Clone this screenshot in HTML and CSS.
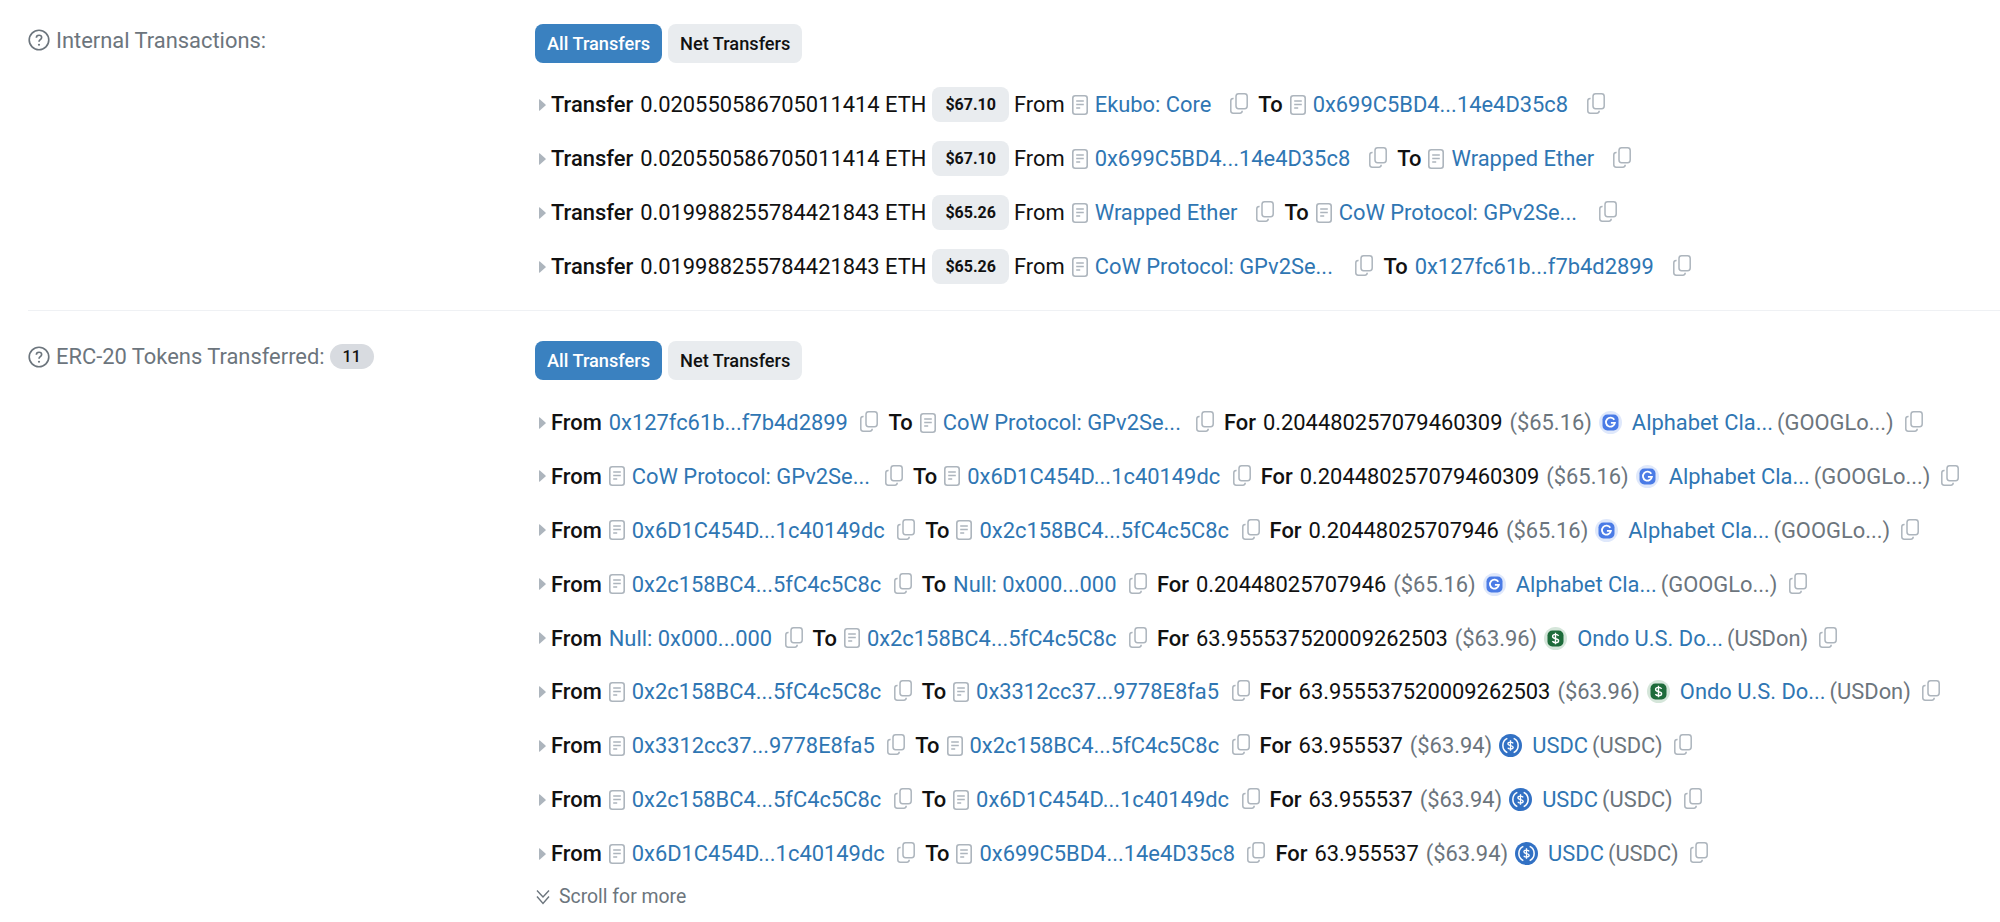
FILE: index.html
```html
<!DOCTYPE html>
<html lang="en">
<head>
    <meta charset="UTF-8">
    <title>Transaction details</title>
    <link rel="stylesheet" href="styles.css">
</head>
<body>
    <svg class="sprites" width="0" height="0">
        <symbol id="help" viewBox="0 0 20 20">
            <circle cx="10" cy="10" r="8.9" fill="none" stroke="currentColor" stroke-width="1.5"/>
            <path d="M7.6 8c0-1.5 1.100-2.300 2.400-2.300s2.400 .8 2.400 2.100c0 1.900-2.400 1.900-2.400 3.700" fill="none" stroke="currentColor" stroke-width="1.5"/>
            <circle cx="10" cy="14.300" r="1" fill="currentColor"/>
        </symbol>
        <symbol id="caret" viewBox="0 0 8 12">
            <path d="M1 .8v10.400c0 .5 .5 .7 .9 .4l5.600-5.200c.3-.3 .3-.6 0-.9L1.900 .4C1.500 .1 1 .3 1 .8z" fill="currentColor"/>
        </symbol>
        <symbol id="doc" viewBox="0 0 16 20">
            <rect x=".8" y=".8" width="14.400" height="18.400" rx="2.400" fill="none" stroke="currentColor" stroke-width="1.600"/>
            <path d="M4.200 6h7.600M4.200 9.500h7.600M4.200 13h4" stroke="currentColor" stroke-width="1.300"/>
        </symbol>
        <symbol id="copy" viewBox="0 0 18 21">
            <rect x="6" y=".8" width="11.200" height="14.900" rx="2.600" fill="none" stroke="currentColor" stroke-width="1.500"/>
            <path d="M3.600 5.400h-.4A2.400 2.400 0 0 0 .8 7.800v10a2.400 2.400 0 0 0 2.400 2.400h6.600a2.400 2.400 0 0 0 2.400-2.400" fill="none" stroke="currentColor" stroke-width="1.500"/>
        </symbol>
        <symbol id="chevrons" viewBox="0 0 16 16">
            <path d="M2 1.500l6 6.500 6-6.500M2 7.500l6 7 6-7" fill="none" stroke="currentColor" stroke-width="1.400"/>
        </symbol>
        <symbol id="google" viewBox="0 0 23 23">
            <circle cx="11.500" cy="11.500" r="11.500" fill="#dfe8fb"/>
            <rect x="3.500" y="3.500" width="16" height="16" rx="4.800" fill="#4a7be6"/>
            <path d="M15.300 8.800a4.500 4.500 0 1 0 .6 3.100h-4" fill="none" stroke="#fff" stroke-width="1.800"/>
        </symbol>
        <symbol id="ondo" viewBox="0 0 23 23">
            <circle cx="11.500" cy="11.500" r="11.500" fill="#d5e6da"/>
            <rect x="3.500" y="3.500" width="16" height="16" rx="4.800" fill="#1d6b3a"/>
            <path d="M14.600 8.800c-.6-1-1.700-1.400-3.100-1.400-1.600 0-2.900 .8-2.900 2.100 0 3 6 1.400 6 4.200 0 1.300-1.400 2-3.100 2-1.400 0-2.500-.5-3.100-1.500M11.500 5.800v11.400" fill="none" stroke="#fff" stroke-width="1.400"/>
        </symbol>
        <symbol id="usdc" viewBox="0 0 24 24">
            <circle cx="12" cy="12" r="12" fill="#3271c4"/>
            <path d="M8.700 4.600a8.200 8.200 0 0 0 0 14.800M15.300 4.600a8.200 8.200 0 0 1 0 14.800" fill="none" stroke="#fff" stroke-width="1.600"/>
            <path d="M14.800 9.800c-.4-.9-1.500-1.400-2.800-1.400-1.500 0-2.700 .7-2.700 1.800 0 2.600 5.500 1.200 5.500 3.700 0 1.100-1.300 1.800-2.800 1.800-1.300 0-2.400-.5-2.800-1.400M12 6.600v10.800" fill="none" stroke="#fff" stroke-width="1.400"/>
        </symbol>
    </svg>

    <section class="section">
        <div class="label">
            <svg class="help"><use href="#help"/></svg>
            <span>Internal Transactions:</span>
        </div>
        <div class="content">
            <div class="tabs">
                <button class="tab active">All Transfers</button>
                <button class="tab">Net Transfers</button>
            </div>
            <ul class="rows internal">
                <li class="row">
                    <svg class="caret"><use href="#caret"/></svg>
                    <b>Transfer</b><span>0.020550586705011414 ETH</span><span class="price">$67.10</span>
                    <span>From</span>
                    <svg class="doc"><use href="#doc"/></svg><a class="link wide">Ekubo: Core</a><svg class="copy"><use href="#copy"/></svg>
                    <b>To</b>
                    <svg class="doc"><use href="#doc"/></svg><a class="link wide">0x699C5BD4...14e4D35c8</a><svg class="copy"><use href="#copy"/></svg>
                </li>
                <li class="row">
                    <svg class="caret"><use href="#caret"/></svg>
                    <b>Transfer</b><span>0.020550586705011414 ETH</span><span class="price">$67.10</span>
                    <span>From</span>
                    <svg class="doc"><use href="#doc"/></svg><a class="link wide">0x699C5BD4...14e4D35c8</a><svg class="copy"><use href="#copy"/></svg>
                    <b>To</b>
                    <svg class="doc"><use href="#doc"/></svg><a class="link wide">Wrapped Ether</a><svg class="copy"><use href="#copy"/></svg>
                </li>
                <li class="row">
                    <svg class="caret"><use href="#caret"/></svg>
                    <b>Transfer</b><span>0.019988255784421843 ETH</span><span class="price">$65.26</span>
                    <span>From</span>
                    <svg class="doc"><use href="#doc"/></svg><a class="link wide">Wrapped Ether</a><svg class="copy"><use href="#copy"/></svg>
                    <b>To</b>
                    <svg class="doc"><use href="#doc"/></svg><a class="link wider">CoW Protocol: GPv2Se...</a><svg class="copy"><use href="#copy"/></svg>
                </li>
                <li class="row">
                    <svg class="caret"><use href="#caret"/></svg>
                    <b>Transfer</b><span>0.019988255784421843 ETH</span><span class="price">$65.26</span>
                    <span>From</span>
                    <svg class="doc"><use href="#doc"/></svg><a class="link wider">CoW Protocol: GPv2Se...</a><svg class="copy"><use href="#copy"/></svg>
                    <b>To</b>
                    <a class="link wide">0x127fc61b...f7b4d2899</a><svg class="copy"><use href="#copy"/></svg>
                </li>
            </ul>
        </div>
    </section>

    <section class="section">
        <div class="label">
            <svg class="help"><use href="#help"/></svg>
            <span>ERC-20 Tokens Transferred:</span>
            <span class="count">11</span>
        </div>
        <div class="content">
            <div class="tabs">
                <button class="tab active">All Transfers</button>
                <button class="tab">Net Transfers</button>
            </div>
            <ul class="rows">
                <li class="row">
                    <svg class="caret"><use href="#caret"/></svg>
                    <b>From</b>
                    <a class="link">0x127fc61b...f7b4d2899</a><svg class="copy"><use href="#copy"/></svg>
                    <b>To</b>
                    <svg class="doc"><use href="#doc"/></svg><a class="link mid">CoW Protocol: GPv2Se...</a><svg class="copy"><use href="#copy"/></svg>
                    <b>For</b><span>0.204480257079460309</span><span class="muted">($65.16)</span>
                    <svg class="token"><use href="#google"/></svg><a class="name">Alphabet Cla...</a><span class="symbol">(GOOGLo...)</span><svg class="copy"><use href="#copy"/></svg>
                </li>
                <li class="row">
                    <svg class="caret"><use href="#caret"/></svg>
                    <b>From</b>
                    <svg class="doc"><use href="#doc"/></svg><a class="link mid">CoW Protocol: GPv2Se...</a><svg class="copy"><use href="#copy"/></svg>
                    <b>To</b>
                    <svg class="doc"><use href="#doc"/></svg><a class="link">0x6D1C454D...1c40149dc</a><svg class="copy"><use href="#copy"/></svg>
                    <b>For</b><span>0.204480257079460309</span><span class="muted">($65.16)</span>
                    <svg class="token"><use href="#google"/></svg><a class="name">Alphabet Cla...</a><span class="symbol">(GOOGLo...)</span><svg class="copy"><use href="#copy"/></svg>
                </li>
                <li class="row">
                    <svg class="caret"><use href="#caret"/></svg>
                    <b>From</b>
                    <svg class="doc"><use href="#doc"/></svg><a class="link">0x6D1C454D...1c40149dc</a><svg class="copy"><use href="#copy"/></svg>
                    <b>To</b>
                    <svg class="doc"><use href="#doc"/></svg><a class="link">0x2c158BC4...5fC4c5C8c</a><svg class="copy"><use href="#copy"/></svg>
                    <b>For</b><span>0.20448025707946</span><span class="muted">($65.16)</span>
                    <svg class="token"><use href="#google"/></svg><a class="name">Alphabet Cla...</a><span class="symbol">(GOOGLo...)</span><svg class="copy"><use href="#copy"/></svg>
                </li>
                <li class="row">
                    <svg class="caret"><use href="#caret"/></svg>
                    <b>From</b>
                    <svg class="doc"><use href="#doc"/></svg><a class="link">0x2c158BC4...5fC4c5C8c</a><svg class="copy"><use href="#copy"/></svg>
                    <b>To</b>
                    <a class="link">Null: 0x000...000</a><svg class="copy"><use href="#copy"/></svg>
                    <b>For</b><span>0.20448025707946</span><span class="muted">($65.16)</span>
                    <svg class="token"><use href="#google"/></svg><a class="name">Alphabet Cla...</a><span class="symbol">(GOOGLo...)</span><svg class="copy"><use href="#copy"/></svg>
                </li>
                <li class="row">
                    <svg class="caret"><use href="#caret"/></svg>
                    <b>From</b>
                    <a class="link">Null: 0x000...000</a><svg class="copy"><use href="#copy"/></svg>
                    <b>To</b>
                    <svg class="doc"><use href="#doc"/></svg><a class="link">0x2c158BC4...5fC4c5C8c</a><svg class="copy"><use href="#copy"/></svg>
                    <b>For</b><span>63.955537520009262503</span><span class="muted">($63.96)</span>
                    <svg class="token"><use href="#ondo"/></svg><a class="name">Ondo U.S. Do...</a><span class="symbol">(USDon)</span><svg class="copy"><use href="#copy"/></svg>
                </li>
                <li class="row">
                    <svg class="caret"><use href="#caret"/></svg>
                    <b>From</b>
                    <svg class="doc"><use href="#doc"/></svg><a class="link">0x2c158BC4...5fC4c5C8c</a><svg class="copy"><use href="#copy"/></svg>
                    <b>To</b>
                    <svg class="doc"><use href="#doc"/></svg><a class="link">0x3312cc37...9778E8fa5</a><svg class="copy"><use href="#copy"/></svg>
                    <b>For</b><span>63.955537520009262503</span><span class="muted">($63.96)</span>
                    <svg class="token"><use href="#ondo"/></svg><a class="name">Ondo U.S. Do...</a><span class="symbol">(USDon)</span><svg class="copy"><use href="#copy"/></svg>
                </li>
                <li class="row">
                    <svg class="caret"><use href="#caret"/></svg>
                    <b>From</b>
                    <svg class="doc"><use href="#doc"/></svg><a class="link">0x3312cc37...9778E8fa5</a><svg class="copy"><use href="#copy"/></svg>
                    <b>To</b>
                    <svg class="doc"><use href="#doc"/></svg><a class="link">0x2c158BC4...5fC4c5C8c</a><svg class="copy"><use href="#copy"/></svg>
                    <b>For</b><span>63.955537</span><span class="muted">($63.94)</span>
                    <svg class="token"><use href="#usdc"/></svg><a class="name">USDC</a><span class="symbol">(USDC)</span><svg class="copy"><use href="#copy"/></svg>
                </li>
                <li class="row">
                    <svg class="caret"><use href="#caret"/></svg>
                    <b>From</b>
                    <svg class="doc"><use href="#doc"/></svg><a class="link">0x2c158BC4...5fC4c5C8c</a><svg class="copy"><use href="#copy"/></svg>
                    <b>To</b>
                    <svg class="doc"><use href="#doc"/></svg><a class="link">0x6D1C454D...1c40149dc</a><svg class="copy"><use href="#copy"/></svg>
                    <b>For</b><span>63.955537</span><span class="muted">($63.94)</span>
                    <svg class="token"><use href="#usdc"/></svg><a class="name">USDC</a><span class="symbol">(USDC)</span><svg class="copy"><use href="#copy"/></svg>
                </li>
                <li class="row">
                    <svg class="caret"><use href="#caret"/></svg>
                    <b>From</b>
                    <svg class="doc"><use href="#doc"/></svg><a class="link">0x6D1C454D...1c40149dc</a><svg class="copy"><use href="#copy"/></svg>
                    <b>To</b>
                    <svg class="doc"><use href="#doc"/></svg><a class="link">0x699C5BD4...14e4D35c8</a><svg class="copy"><use href="#copy"/></svg>
                    <b>For</b><span>63.955537</span><span class="muted">($63.94)</span>
                    <svg class="token"><use href="#usdc"/></svg><a class="name">USDC</a><span class="symbol">(USDC)</span><svg class="copy"><use href="#copy"/></svg>
                </li>
            </ul>
            <div class="more">
                <svg class="chevrons"><use href="#chevrons"/></svg>
                <span>Scroll for more</span>
            </div>
        </div>
    </section>
</body>
</html>
```
FILE: styles.css
```css
:root{
    --link: #2f76b3;
    --blue: #3a81c0;
    --grey-100: #e9ecef;
    --grey-300: #d8dbe0;
    --grey-400: #adb5bd;
    --grey-600: #6c757d;
    --ink: #111;
}
*{
    box-sizing: border-box;
}
body{
    margin: 0;
    height: 922px;
    overflow: hidden;
    padding: 24px 0 0 28px;
    background: #fff;
    color: var(--ink);
    font-family: Roboto, "Liberation Sans", sans-serif;
    font-size: 21.900px;
}
.sprites{
    position: absolute;
}
.section{
    display: grid;
    grid-template-columns: 507px 1fr;
}
.section + .section{
    margin-top: 16px;
    padding-top: 30px;
    border-top: 1.5px solid #eff1f4;
}
.label{
    display: flex;
    align-items: center;
    height: 32px;
    color: var(--grey-600);

    .help{
        width: 22px;
        height: 22px;
        margin-right: 6px;
    }
}
.count{
    margin-left: 5px;
    padding: 3px 13px;
    border-radius: 99px;
    background: var(--grey-300);
    color: var(--ink);
    font-size: 16px;
    font-weight: 500;
    line-height: 19px;
}
.tabs{
    display: flex;
    gap: 6px;
}
.tab{
    height: 39px;
    padding: 0 12px;
    border: none;
    border-radius: 8px;
    background: var(--grey-100);
    color: var(--ink);
    font: 500 18.200px Roboto, sans-serif;

    &.active{
        background: var(--blue);
        color: #fff;
    }
}
.rows{
    list-style: none;
    margin: 16px 0 0;
    padding: 0;

    &.internal{
        margin-top: 15px;
    }
}
.row{
    display: flex;
    align-items: center;
    gap: 7px;
    height: 53.900px;
    white-space: nowrap;

    b{
        font-weight: 500;
    }
}
.caret{
    width: 8px;
    height: 12px;
    margin: 0 -2px 0 3px;
    color: var(--grey-400);
}
.price{
    display: flex;
    align-items: center;
    height: 35px;
    margin: 0 -2px 0 -1px;
    padding: 0 13px;
    border-radius: 8px;
    background: var(--grey-100);
    font-size: 16px;
    font-weight: 700;
}
.link{
    color: var(--link);
    margin-right: 5.500px;

    &.mid{
        margin-right: 8px;
    }
    &.wide{
        margin-right: 12px;
    }
    &.wider{
        margin-right: 15.500px;
    }
}
.name{
    color: var(--link);
    margin-right: -3px;
}
.doc{
    width: 16px;
    height: 20px;
    color: var(--grey-400);
}
.copy{
    width: 18px;
    height: 21px;
    margin-right: 3px;
    margin-top: -2px;
    color: var(--grey-400);
}
.muted{
    color: var(--grey-600);
}
.symbol{
    color: var(--grey-600);
    margin-right: 4px;
}
.token{
    width: 23px;
    height: 23px;
    margin-right: 3px;
}
.more{
    display: flex;
    align-items: center;
    gap: 8px;
    margin-top: 3px;
    color: var(--grey-600);
    font-size: 19.400px;
    line-height: 26px;

    .chevrons{
        width: 16px;
        height: 16px;
    }
}
```
